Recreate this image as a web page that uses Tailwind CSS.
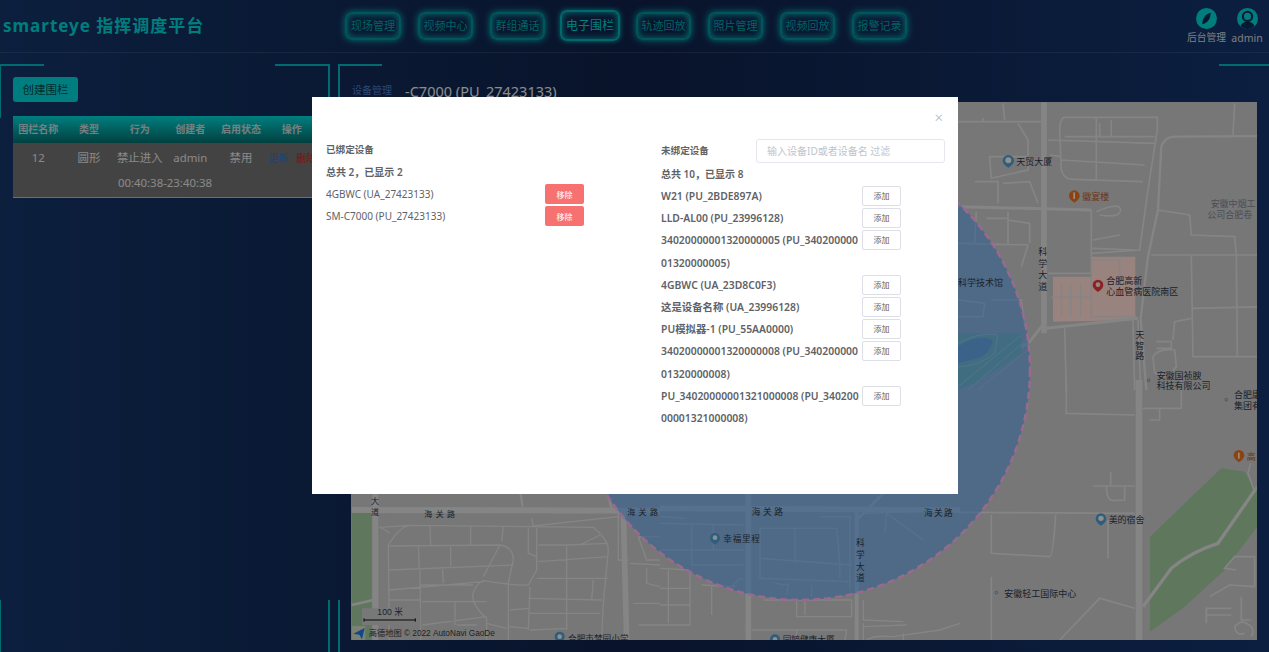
<!DOCTYPE html>
<html lang="en">
<head>
  <meta charset="UTF-8" />
  <title>smarteye</title>
  <script src="https://cdn.jsdelivr.net/npm/@tailwindcss/browser@4"></script>
</head>
<body class="font-['Noto_Sans','Noto_Sans_CJK_SC',sans-serif]">
<div class="relative h-[652px] w-[1269px] overflow-hidden bg-linear-to-r from-[#143467] via-[#0f2148] to-[#14346c]">

  <!-- header -->
  <header class="flex h-[53px] items-start border-b border-white/10">
    <h1 class="mt-[14px] ml-[3px] w-[342px] text-[17px] leading-[24px] font-bold tracking-[1px] text-[#00d0d0]">smarteye 指挥调度平台</h1>
    <nav class="mt-[12px] flex text-[11px] text-[#00a4a8]">
      <a class="mr-[17px] flex h-[28px] w-[56px] items-center justify-center rounded-[7px] border-2 border-[#008f96] shadow-[0_0_7px_#00c0c0,inset_0_0_7px_#00c0c0]">现场管理</a>
      <a class="mr-[17px] flex h-[28px] w-[55px] items-center justify-center rounded-[7px] border-2 border-[#008f96] shadow-[0_0_7px_#00c0c0,inset_0_0_7px_#00c0c0]">视频中心</a>
      <a class="mr-[15px] flex h-[28px] w-[55px] items-center justify-center rounded-[7px] border-2 border-[#008f96] shadow-[0_0_7px_#00c0c0,inset_0_0_7px_#00c0c0]">群组通话</a>
      <a class="mr-[16px] -mt-[2px] flex h-[31px] w-[60px] items-center justify-center rounded-[7px] border-2 border-[#00b0b4] text-[12px] text-[#00d4d4] shadow-[0_0_5px_#00c0c0,inset_0_0_7px_#00c0c0]">电子围栏</a>
      <a class="mr-[17px] flex h-[28px] w-[55px] items-center justify-center rounded-[7px] border-2 border-[#008f96] shadow-[0_0_7px_#00c0c0,inset_0_0_7px_#00c0c0]">轨迹回放</a>
      <a class="mr-[17px] flex h-[28px] w-[55px] items-center justify-center rounded-[7px] border-2 border-[#008f96] shadow-[0_0_7px_#00c0c0,inset_0_0_7px_#00c0c0]">照片管理</a>
      <a class="mr-[17px] flex h-[28px] w-[55px] items-center justify-center rounded-[7px] border-2 border-[#008f96] shadow-[0_0_7px_#00c0c0,inset_0_0_7px_#00c0c0]">视频回放</a>
      <a class="flex h-[28px] w-[55px] items-center justify-center rounded-[7px] border-2 border-[#008f96] shadow-[0_0_7px_#00c0c0,inset_0_0_7px_#00c0c0]">报警记录</a>
    </nav>
    <div class="mt-[8px] ml-auto flex pr-[2px] text-[9.75px] leading-[14px] text-[#d4d4d4]">
      <div class="flex w-[41px] flex-col items-center">
        <svg width="21" height="21" viewBox="0 0 20 20"><circle cx="10" cy="10" r="10" fill="#00d0d0"/><path d="M6 15.5C6 10 9 5.5 14 4.5C14 10 11 14.5 6 15.5Z" fill="#0c2a50"/></svg>
        <span class="mt-[2px] whitespace-nowrap">后台管理</span>
      </div>
      <div class="flex w-[40px] flex-col items-center">
        <svg width="21" height="21" viewBox="0 0 20 20"><circle cx="10" cy="10" r="10" fill="#00d0d0"/><circle cx="10" cy="8" r="4.4" fill="none" stroke="#0c2a50" stroke-width="2"/><path d="M3.5 17C4.5 14 7 13 10 13C13 13 15.500 14 16.500 17C15 19 12.500 20 10 20C7.500 20 5 19 3.500 17Z" fill="#0c2a50"/></svg>
        <span class="mt-[2px] text-[10.5px]">admin</span>
      </div>
    </div>
  </header>

  <main class="mt-[11px] flex h-[588px]">
    <!-- left panel -->
    <section class="relative h-full w-[330px] px-[13px] pt-[13px]">
      <span class="absolute top-0 left-0 h-[2px] w-[44px] bg-[#00b2bb]"></span>
      <span class="absolute top-0 left-0 h-[54px] w-[1px] bg-[#00b2bb]"></span>
      <span class="absolute top-0 right-0 h-[2px] w-[55px] bg-[#00b2bb]"></span>
      <span class="absolute top-0 right-0 h-[54px] w-[2px] bg-[#00b2bb]"></span>
      <span class="absolute bottom-0 left-0 h-[52px] w-[1px] bg-[#00b2bb]"></span>
      <span class="absolute right-0 bottom-0 h-[52px] w-[2px] bg-[#00b2bb]"></span>

      <button class="block h-[25px] w-[65px] rounded-[3px] bg-[#00d2d4] text-[11.5px] text-[#004a50]">创建围栏</button>

      <div class="mt-[14px] w-[304px]">
        <div class="grid h-[27px] grid-cols-6 items-center bg-linear-to-b from-[#00d4d4] to-[#046c6c] text-center text-[10px] font-bold text-[#c4d8d8]">
          <span>围栏名称</span><span>类型</span><span>行为</span><span>创建者</span><span>启用状态</span><span>操作</span>
        </div>
        <div class="h-[55px] border-b border-[#b8b8b8] bg-[#707070] text-[11.400px] text-[#e4e4e4]">
          <div class="grid h-[30px] grid-cols-6 items-center text-center">
            <span>12</span><span>圆形</span><span>禁止进入</span><span>admin</span><span>禁用</span>
            <span class="whitespace-nowrap pl-[2px] text-left text-[10px]"><b class="mr-[8px] font-normal text-[#2f72c8]">更新</b><b class="font-normal text-[#d81818]">删除</b></span>
          </div>
          <div class="text-center leading-[20px]">00:40:38-23:40:38</div>
        </div>
      </div>
    </section>

    <!-- right panel -->
    <section class="relative ml-[8px] flex h-full flex-1 flex-col">
      <span class="absolute top-0 left-0 h-[2px] w-[44px] bg-[#00b2bb]"></span>
      <span class="absolute top-0 left-0 h-[54px] w-[2px] bg-[#00b2bb]"></span>
      <span class="absolute top-0 right-0 h-[2px] w-[50px] bg-[#00b2bb]"></span>
      <span class="absolute bottom-0 left-0 h-[52px] w-[2px] bg-[#00b2bb]"></span>

      <div class="flex h-[38px] items-start pt-[18px] pl-[14px]">
        <span class="mt-[1px] w-[53px] text-[10px] leading-[14px] text-[#4c78c0]">设备管理</span>
        <span class="text-[14.500px] leading-[18px] whitespace-nowrap text-[#e8e8e8]">-C7000 (PU_27423133)</span>
      </div>

      <!-- map -->
      <svg class="ml-[13px] block h-[538px] w-[906px] bg-[#c6c6c6]" viewBox="351 102 906 538" font-family="'Noto Sans CJK SC',sans-serif">
        <!-- right side -->
        <g transform="translate(958 90) scale(.3333)" fill="none" stroke="#dedede" stroke-width="5">
          <path fill="#ffdad4" stroke="none" d="M285 560L400 560L400 500L532 500L532 690L285 695Z"/>
          <path stroke-width="17" d="M258 37L258 730"/>
          <path stroke-width="9" d="M258 700L215 755L0 895M0 350L400 360M265 715L540 685"/>
          <path stroke-width="7" d="M565 900L548 685L570 500L600 360L610 170Q620 140 650 140L933 138"/>
          <path d="M270 150L590 160M318 82L598 82L598 120L570 300L545 480L400 490M318 82Q305 90 305 120L310 240Q320 270 345 268L555 275M415 85L415 270M425 100L425 140M460 90L460 140M320 140L590 140M310 210L560 225M275 195L310 200M400 360L400 550M270 550L400 550M400 510L485 510L485 555M400 560L400 680L535 680M310 580L310 680M338 580L338 680M368 580L368 680M280 622L400 622M415 365Q485 335 488 360Q485 385 425 375M405 450L485 435M405 475L530 480"/>
          <path d="M0 95L258 95M75 85L75 95M135 40L140 90M180 100L210 150L210 240L100 265L95 200L210 200M50 275L120 275L120 340M135 280L215 275L240 340M0 460L210 465M55 365L50 460M150 365L150 460M150 390L215 400L215 460M85 385L150 385M210 465L190 530M0 630L80 640L75 680L0 680M100 630L190 630L200 710"/>
          <path d="M580 495L933 495M600 360L695 375L700 435L830 440L835 495M700 495L705 800L933 800M835 495L838 800M705 655L933 650M830 40L825 135M645 750L650 695L700 685M595 755L640 755L640 775L595 775M585 800Q600 775 650 780L655 830L630 860L590 850ZM320 715L325 900M525 690L530 900M540 690L548 900"/>
          <path stroke="none" fill="#9cd0b0" d="M0 730L190 730L190 790L50 880L0 900Z"/>
          <path stroke="none" fill="#88aed0" d="M0 770Q60 730 105 750Q95 800 40 810L0 820Z"/>
          <path stroke="#dedede" stroke-width="3" d="M0 760Q60 725 120 735L110 790Q60 830 0 830M0 890L190 735M30 900L205 750M60 900L215 775"/>
        </g>
        <g transform="translate(958 380) scale(.3333)" fill="none" stroke="#dedede" stroke-width="5">
          <path fill="#9ec79c" stroke="none" d="M576 470L790 265L860 275L880 310L898 330L898 440L800 570L680 680L576 755Z"/>
          <path stroke-width="20" d="M543 0L543 780"/>
          <path stroke-width="10" d="M555 680L640 565Q700 515 780 490L898 320"/>
          <path d="M878 250L870 280L888 330"/>
          <path d="M0 397L530 400M100 405L100 520L275 530Q285 530 293 405M325 0L325 100L530 105M555 85L670 85L670 0M575 120L605 120L605 85M405 318L530 318M445 318Q445 360 465 362L500 360L500 320M458 275L458 318M450 420L450 535M100 590L100 780M305 780L425 655L530 685M745 730L745 685L820 685M745 705L820 705M755 650L815 615L890 620L890 530L830 530L800 565L835 570M850 650L850 720L880 720M830 740Q850 720 865 730Q895 745 880 770M830 740Q835 770 860 760"/>
        </g>
        <!-- bottom left -->
        <g transform="translate(340 490) scale(.3333)" fill="none" stroke="#dedede" stroke-width="4">
          <path fill="#9ec79c" stroke="none" d="M35 52L95 52L95 450L35 450Z"/>
          <path stroke-width="18" d="M106 0L106 450M35 60L960 62"/>
          <path stroke-width="7" d="M540 0L548 50M800 0L815 55M35 345L100 330"/>
          <path stroke-width="17" d="M850 60L860 450"/>
          <path d="M118 112L210 106L760 112Q805 150 805 180L790 340L785 450M148 450L145 165Q180 108 210 106M118 112Q140 120 148 130M270 110L272 165M392 110L392 165M490 110L485 155M148 168L480 165Q520 170 520 210L505 280L505 355L505 450M235 170L238 235M332 170L332 228M148 240L520 225M240 240L242 450M308 235L310 280M148 300L430 275M148 330L240 330M242 285L400 285M430 270Q400 290 398 320Q400 350 440 385L440 450M480 165L430 260M430 272Q500 285 565 285L590 240L590 115M565 115L565 190L590 200M595 165L680 165M680 165L805 160M720 165L780 135M595 215L805 200M590 265L805 265M565 325L785 330M565 370L780 370M510 360L565 355M505 410L565 415M680 170L680 420M760 270L755 330M570 290L565 420M345 335L345 405M245 335L440 335M248 405L440 380M350 405L410 405M440 400L500 415M570 420L680 415M575 85L580 108L835 80M835 70L835 210L865 210M895 140L960 140M895 140L920 210L960 210M870 220L960 225M880 340L960 340M895 405L960 405M920 235L920 280L960 290"/>
          <rect x="66" y="355" width="175" height="50" fill="#c9c9c9" stroke="none"/>
          <rect x="36" y="408" width="40" height="42" fill="#cdd8c0" stroke="none"/>
        </g>
        <!-- bottom middle -->
        <g transform="translate(660 490) scale(.3333)" fill="none" stroke="#dedede" stroke-width="4">
          <path stroke-width="17" d="M265 0L265 450M0 55L900 60"/>
          <path stroke-width="12" d="M590 60L590 450"/>
          <path stroke-width="9" d="M590 90L680 0"/>
          <path d="M0 100L250 105M95 105L95 225L250 225M160 105L160 180M0 80L80 85M0 180L250 180M0 235L90 240L90 405L0 405M25 240L25 400M0 295L90 295M0 345L90 345M125 285L230 290M155 285L155 375M215 290L240 265L250 270M300 115L530 115Q540 200 540 265M300 115L300 205L575 225M405 115L405 220M300 205L300 265L570 275M480 80L570 80L570 300M680 70L675 130M610 70L900 60M680 70L790 150M345 280L385 285L380 315M455 285L455 320M310 330L575 330M410 330L410 380L575 380L575 330M435 330L435 375M610 330L610 390L730 395M610 400L610 450M610 410L740 405M620 450Q640 435 700 440L840 420L900 400M275 420L560 420L555 450M410 420L410 450M730 450L730 430"/>
        </g>

        <!-- fence -->
        <circle cx="800" cy="370" r="230" fill="#3e9cfc" fill-opacity=".5" stroke="#ffb0f0" stroke-width="2.500" stroke-dasharray="7 4"/>

        <!-- labels right -->
        <g transform="translate(958 90) scale(.3333)" font-size="27" fill="#303848">
          <path fill="#4e9bd0" d="M134 212a17 17 0 1 1 34 0q0 10-17 21q-17-11-17-21Z"/><circle cx="151" cy="211" r="9" fill="#e8f0f0"/>
          <text x="175" y="224">天贸大厦</text>
          <path fill="#e8701e" d="M333 317a16 16 0 1 1 32 0q0 10-16 21q-16-11-16-21Z"/><rect x="346" y="307" width="5" height="20" fill="#ffe8d8"/>
          <text x="373" y="331" fill="#b85a20">徽宴楼</text>
          <text fill="#7c8494"><tspan x="758" y="350">安徽中烟工</tspan><tspan x="748" y="385">公司合肥卷</tspan></text>
          <text><tspan x="241" y="495">科</tspan><tspan x="241" y="530">学</tspan><tspan x="241" y="565">大</tspan><tspan x="241" y="600">道</tspan></text>
          <text><tspan x="532" y="745">天</tspan><tspan x="532" y="777">智</tspan><tspan x="532" y="808">路</tspan></text>
          <text><tspan x="445" y="583">合肥高新</tspan><tspan x="445" y="616">心血管病医院南区</tspan></text>
          <path fill="#e83838" d="M404 585a16 16 0 1 1 32 0q0 10-16 21q-16-11-16-21Z"/><circle cx="420" cy="584" r="7" fill="#ffdede"/>
          <text x="0" y="589">科学技术馆</text>
          <text><tspan x="596" y="866">安徽国祯腴</tspan><tspan x="596" y="897">科技有限公司</tspan></text>
          <circle cx="572" cy="871" r="4" fill="none" stroke="#5878a8" stroke-width="2"/>
        </g>
        <g transform="translate(958 380) scale(.3333)" font-size="27" fill="#303848">
          <text><tspan x="828" y="55">合肥康</tspan><tspan x="828" y="88">集团有</tspan></text>
          <circle cx="805" cy="59" r="4" fill="none" stroke="#5878a8" stroke-width="2"/>
          <path fill="#e8701e" d="M827 226a16 16 0 1 1 32 0q0 10-16 21q-16-11-16-21Z"/><rect x="840" y="218" width="5" height="18" fill="#ffe8d8"/>
          <text x="866" y="241" fill="#b85a20">高</text>
          <path fill="#4e9bd0" d="M413 416a16 16 0 1 1 32 0q0 10-16 21q-16-11-16-21Z"/><circle cx="429" cy="415" r="8" fill="#e8f0f0"/>
          <text x="452" y="430">美的宿舍</text>
          <circle cx="115" cy="638" r="4" fill="none" stroke="#5878a8" stroke-width="2"/>
          <text x="139" y="650">安徽轻工国际中心</text>
        </g>
        <!-- labels bottom -->
        <g transform="translate(340 490) scale(.3333)" font-size="24" fill="#303848">
          <text><tspan x="93" y="42">大</tspan><tspan x="93" y="74">道</tspan></text>
          <text x="253" y="82" letter-spacing="10">海关路</text>
          <text x="862" y="74" letter-spacing="10">海关路</text>
          <text x="112" y="376" font-size="26" font-family="'Liberation Sans','Noto Sans CJK SC',sans-serif">100 米</text>
          <path d="M72 385V395M226 385V395M72 390H226" fill="none" stroke="#101010" stroke-width="3"/>
          <path fill="#1e78e8" d="M74 414L40 431L58 434L66 448Z"/>
          <text x="86" y="437" font-size="24.800" fill="#383838" font-family="'Liberation Sans','Noto Sans CJK SC',sans-serif">高德地图 © 2022 AutoNavi GaoDe</text>
          <path fill="#4e9bd0" d="M644 440a15 15 0 1 1 30 0q0 10-15 20q-15-10-15-20Z"/><circle cx="659" cy="440" r="7" fill="#e8f0f0"/>
          <text x="684" y="456" font-size="26">合肥市梦园小学</text>
        </g>
        <g transform="translate(660 490) scale(.3333)" font-size="26" fill="#303848">
          <text x="275" y="76" letter-spacing="8">海关路</text>
          <text x="792" y="79" letter-spacing="4">海关路</text>
          <path fill="#4e9bd0" d="M150 144a15 15 0 1 1 30 0q0 10-15 20q-15-10-15-20Z"/><circle cx="165" cy="143" r="7" fill="#e8f0f0"/>
          <text x="190" y="157" letter-spacing="2">幸福里程</text>
          <text><tspan x="588" y="167">科</tspan><tspan x="588" y="204">学</tspan><tspan x="588" y="239">大</tspan><tspan x="588" y="274">道</tspan></text>
          <path fill="#4e9bd0" d="M330 448a15 15 0 1 1 30 0q0 10-15 20q-15-10-15-20Z"/><circle cx="345" cy="448" r="7" fill="#e8f0f0"/>
          <text x="368" y="460">同毓健康大厦</text>
        </g>
      </svg>
    </section>
  </main>

  <!-- dialog -->
  <div class="absolute inset-0 bg-black/40">
    <div class="absolute top-[97px] left-[312px] flex h-[397px] w-[646px] bg-white pt-[42px] pl-[14px] text-[#606266]">
      <span class="absolute top-[11px] right-[15px] text-[15px] leading-[18px] font-light text-[#b0b3b8]">×</span>

      <div class="w-[335px] text-[10px] leading-[22px]">
        <p class="text-[9.600px] font-semibold">已绑定设备</p>
        <p class="font-semibold">总共 2，已显示 2</p>
        <div class="flex h-[22px] items-center"><span class="w-[219px]">4GBWC (UA_27423133)</span><button class="h-[20px] w-[39px] rounded-[2px] bg-[#f87171] text-[8px] text-white">移除</button></div>
        <div class="flex h-[22px] items-center"><span class="w-[219px]">SM-C7000 (PU_27423133)</span><button class="h-[20px] w-[39px] rounded-[2px] bg-[#f87171] text-[8px] text-white">移除</button></div>
      </div>

      <div class="w-[284px] text-[10.400px] font-semibold">
        <div class="flex h-[24px] items-center">
          <span class="w-[95px] text-[9.600px]">未绑定设备</span>
          <input class="h-[24px] w-[189px] rounded-[3px] border border-[#e4e7ed] px-[10px] text-[10px] font-normal outline-none placeholder:text-[#c0c4cc]" placeholder="输入设备ID或者设备名 过滤" />
        </div>
        <p class="text-[10px] leading-[22px]">总共 10，已显示 8</p>
        <div class="flex items-start"><span class="w-[201px] leading-[22.200px] break-all">W21 (PU_2BDE897A)</span><button class="mt-[1px] h-[20px] w-[39px] rounded-[2px] border border-[#dcdfe6] text-[8px] font-normal">添加</button></div>
        <div class="flex items-start"><span class="w-[201px] leading-[22.200px] break-all">LLD-AL00 (PU_23996128)</span><button class="mt-[1px] h-[20px] w-[39px] rounded-[2px] border border-[#dcdfe6] text-[8px] font-normal">添加</button></div>
        <div class="flex items-start"><span class="w-[201px] leading-[22.200px] break-all">34020000001320000005 (PU_34020000001320000005)</span><button class="mt-[1px] h-[20px] w-[39px] rounded-[2px] border border-[#dcdfe6] text-[8px] font-normal">添加</button></div>
        <div class="flex items-start"><span class="w-[201px] leading-[22.200px] break-all">4GBWC (UA_23D8C0F3)</span><button class="mt-[1px] h-[20px] w-[39px] rounded-[2px] border border-[#dcdfe6] text-[8px] font-normal">添加</button></div>
        <div class="flex items-start"><span class="w-[201px] leading-[22.200px] break-all">这是设备名称 (UA_23996128)</span><button class="mt-[1px] h-[20px] w-[39px] rounded-[2px] border border-[#dcdfe6] text-[8px] font-normal">添加</button></div>
        <div class="flex items-start"><span class="w-[201px] leading-[22.200px] break-all">PU模拟器-1 (PU_55AA0000)</span><button class="mt-[1px] h-[20px] w-[39px] rounded-[2px] border border-[#dcdfe6] text-[8px] font-normal">添加</button></div>
        <div class="flex items-start"><span class="w-[201px] leading-[22.200px] break-all">34020000001320000008 (PU_34020000001320000008)</span><button class="mt-[1px] h-[20px] w-[39px] rounded-[2px] border border-[#dcdfe6] text-[8px] font-normal">添加</button></div>
        <div class="flex items-start"><span class="w-[201px] leading-[22.200px] break-all">PU_34020000001321000008 (PU_34020000001321000008)</span><button class="mt-[1px] h-[20px] w-[39px] rounded-[2px] border border-[#dcdfe6] text-[8px] font-normal">添加</button></div>
      </div>
    </div>
  </div>
</div>
</body>
</html>
